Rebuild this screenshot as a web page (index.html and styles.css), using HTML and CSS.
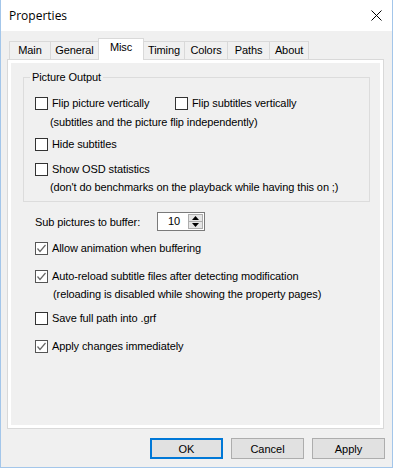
FILE: index.html
```html
<!DOCTYPE html>
<html lang="en">
<head>
  <meta charset="UTF-8" />
  <title>Properties</title>
  <link rel="stylesheet" href="styles.css">
</head>
<body>
<div class="window">

  <!-- Title bar -->
  <div class="titlebar">
    <span class="title">Properties</span>
    <svg class="close" width="11" height="11" viewBox="0 0 11 11">
      <path d="M0.5 0.5 L10.5 10.5 M10.5 0.5 L0.5 10.5" stroke="#000" stroke-width="1" fill="none"/>
    </svg>
  </div>

  <!-- Tabs -->
  <div class="tabs">
    <div class="tab tab-main">Main</div>
    <div class="tab tab-general">General</div>
    <div class="tab tab-misc selected">Misc</div>
    <div class="tab tab-timing">Timing</div>
    <div class="tab tab-colors">Colors</div>
    <div class="tab tab-paths">Paths</div>
    <div class="tab tab-about">About</div>
  </div>

  <!-- Tab page -->
  <div class="panel">
    <div class="page">

      <fieldset class="group">
        <legend>Picture Output</legend>
        <div class="row">
          <label class="check first"><span class="box"></span>Flip picture vertically</label>
          <label class="check"><span class="box"></span>Flip subtitles vertically</label>
        </div>
        <div class="note note-group gap-6">(subtitles and the picture flip independently)</div>
        <div class="row gap-9">
          <label class="check"><span class="box"></span>Hide subtitles</label>
        </div>
        <div class="row gap-12">
          <label class="check"><span class="box"></span>Show OSD statistics</label>
        </div>
        <div class="note note-group gap-5">(don't do benchmarks on the playback while having this on ;)</div>
      </fieldset>

      <div class="options">
        <div class="spin-row">
          <span class="spin-label">Sub pictures to buffer:</span>
          <div class="spin-field">
            <span class="spin-value">10</span>
            <div class="spin-btns">
              <span class="spin-btn"><svg width="7" height="4" viewBox="0 0 7 4"><path d="M3.5 0 L7 4 L0 4 Z" fill="#000"/></svg></span>
              <span class="spin-btn"><svg width="7" height="4" viewBox="0 0 7 4"><path d="M0 0 L7 0 L3.5 4 Z" fill="#000"/></svg></span>
            </div>
          </div>
        </div>

        <div class="row gap-11">
          <label class="check"><span class="box checked"><svg width="11" height="11" viewBox="0 0 11 11"><path d="M1.5 5.5 L4 8.5 L9.5 2" stroke="#666" stroke-width="1.2" fill="none"/></svg></span>Allow animation when buffering</label>
        </div>
        <div class="row gap-15">
          <label class="check"><span class="box checked"><svg width="11" height="11" viewBox="0 0 11 11"><path d="M1.5 5.5 L4 8.5 L9.5 2" stroke="#666" stroke-width="1.2" fill="none"/></svg></span>Auto-reload subtitle files after detecting modification</label>
        </div>
        <div class="note note-outer gap-5">(reloading is disabled while showing the property pages)</div>
        <div class="row gap-11">
          <label class="check"><span class="box"></span>Save full path into .grf</label>
        </div>
        <div class="row gap-15">
          <label class="check"><span class="box checked"><svg width="11" height="11" viewBox="0 0 11 11"><path d="M1.5 5.5 L4 8.5 L9.5 2" stroke="#666" stroke-width="1.2" fill="none"/></svg></span>Apply changes immediately</label>
        </div>
      </div>

    </div>
  </div>

  <!-- Dialog buttons -->
  <div class="buttons">
    <button class="btn default">OK</button>
    <button class="btn">Cancel</button>
    <button class="btn">Apply</button>
  </div>

</div>
</body>
</html>
```

FILE: styles.css
```css
/* Plain dialog look, MS Sans Serif stand-in */
html, body {
  margin: 0;
  padding: 0;
  font-family: "Liberation Sans", Arial, sans-serif;
  font-size: 11px;
  letter-spacing: -0.1px;
  color: #000;
}

.window {
  width: 393px;
  height: 468px;
  box-sizing: border-box;
  border: 1px solid #a3c6ea;
  border-top: none;
  background: #f0f0f0;
  display: flex;
  flex-direction: column;
}

/* Title bar */
.titlebar {
  height: 31px;
  flex: none;
  background: #fff;
  display: flex;
  align-items: center;
  justify-content: space-between;
  padding: 0 10px 0 8px;
}
.title {
  font-family: "Segoe UI", "Open Sans", sans-serif;
  font-size: 12px;
  letter-spacing: 0;
}
.close {
  display: block;
}

/* Tab strip */
.tabs {
  display: flex;
  align-items: flex-end;
  height: 21px;
  margin: 7px 0 0 8px;
  flex: none;
}
.tab {
  height: 18px;
  box-sizing: border-box;
  border: 1px solid #d9d9d9;
  border-bottom: none;
  margin-right: -1px;
  text-align: center;
  line-height: 17px;
  background: #f0f0f0;
}
.tab.selected {
  height: 22px;
  margin-bottom: -1px;
  background: #fff;
  line-height: 17px;
  position: relative;
  z-index: 1;
}
.tab-main    { width: 42px; }
.tab-general { width: 49px; }
.tab-misc    { width: 46px; }
.tab-timing  { width: 42px; }
.tab-colors  { width: 44px; }
.tab-paths   { width: 43px; }
.tab-about   { width: 40px; }

/* Tab page */
.panel {
  margin-left: 6px;
  width: 377px;
  height: 370px;
  flex: none;
  box-sizing: border-box;
  border: 1px solid #d9d9d9;
  background: #fff;
  padding: 3px;
}
.page {
  height: 100%;
  background: #f0f0f0;
  overflow: hidden;
}

/* Group box */
.group {
  margin: 7px 10px 0 12px;
  padding: 13px 10px 7px 11px;
  border: 1px solid #dcdcdc;
  min-width: 0;
}
.group legend {
  padding: 0 2px;
  margin-left: -5px;
  line-height: 14px;
}

.row {
  display: flex;
  height: 13px;
  align-items: center;
}
.check {
  display: flex;
  align-items: center;
  gap: 4px;
  height: 13px;
  line-height: 13px;
  white-space: nowrap;
}
.check.first {
  width: 140px;
}
.box {
  width: 13px;
  height: 13px;
  box-sizing: border-box;
  border: 1px solid #333;
  background: #fff;
  display: flex;
  align-items: center;
  justify-content: center;
  flex: none;
}
.box.checked {
  border-color: #555;
}
.box svg {
  display: block;
}

.note {
  height: 13px;
  line-height: 13px;
  white-space: nowrap;
}
.note-group { margin-left: 15px; }
.note-outer { margin-left: 18px; }

.gap-5  { margin-top: 5px; }
.gap-6  { margin-top: 6px; }
.gap-9  { margin-top: 9px; }
.gap-11 { margin-top: 11px; }
.gap-12 { margin-top: 12px; }
.gap-15 { margin-top: 15px; }

/* Options below the group */
.options {
  padding-left: 24px;
}
.spin-row {
  display: flex;
  align-items: center;
  margin-top: 10px;
  height: 19px;
}
.spin-label {
  width: 122px;
}
.spin-field {
  width: 48px;
  height: 19px;
  box-sizing: border-box;
  border: 1px solid #7a7a7a;
  background: #fff;
  display: flex;
}
.spin-value {
  flex: 1;
  text-align: right;
  padding-right: 8px;
  line-height: 17px;
}
.spin-btns {
  width: 16px;
  display: flex;
  flex-direction: column;
  padding: 1px 1px 1px 0;
  box-sizing: border-box;
}
.spin-btn {
  flex: 1;
  display: flex;
  align-items: center;
  justify-content: center;
  background: #e5e5e5;
  border: 1px solid #adadad;
}
.spin-btn + .spin-btn {
  border-top: none;
}
.spin-btn svg {
  display: block;
}

/* Dialog buttons */
.buttons {
  display: flex;
  justify-content: flex-end;
  gap: 8px;
  margin-top: 9px;
  padding-right: 7px;
}
.btn {
  width: 73px;
  height: 21px;
  box-sizing: border-box;
  border: 1px solid #adadad;
  background: #e1e1e1;
  font-family: "Liberation Sans", Arial, sans-serif;
  font-size: 11px;
  color: #000;
  padding: 0;
  margin: 0;
}
.btn.default {
  border: 2px solid #0078d7;
}
```
